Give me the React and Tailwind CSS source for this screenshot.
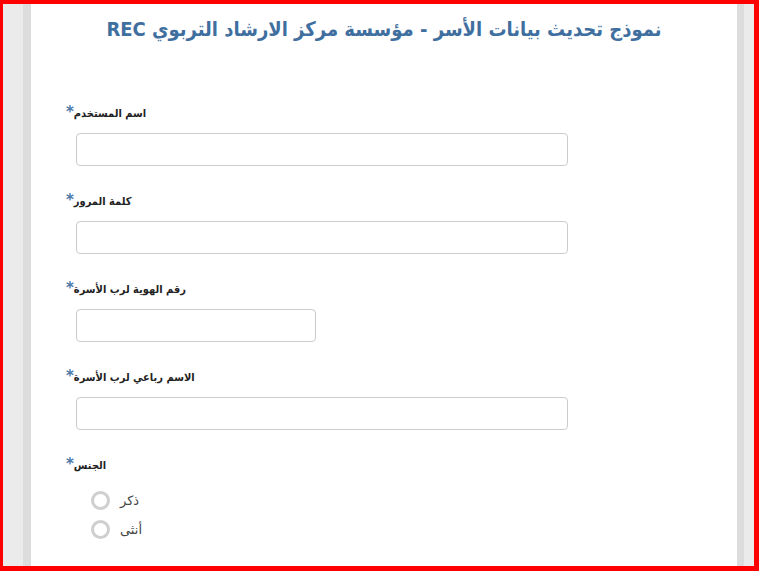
// Family data update form — static UI snapshot
const FIELDS = [
  { label: "اسم المستخدم", width: "w-[492px]" },
  { label: "كلمة المرور", width: "w-[492px]" },
  { label: "رقم الهوية لرب الأسرة", width: "w-[240px]" },
  { label: "الاسم رباعي لرب الأسرة", width: "w-[492px]" },
];

function FieldLabel({ children }) {
  return (
    <div className="flex h-[20px] items-center">
      <span className="mb-[3px] text-[15px] font-bold leading-none text-[#4a77a8]">*</span>
      <span
        dir="rtl"
        className="text-[11px] font-bold text-[#222]"
        style={{ fontFamily: '"DejaVu Sans Condensed", "DejaVu Sans", sans-serif' }}
      >
        {children}
      </span>
    </div>
  );
}

function Radio({ label }) {
  return (
    <label className="flex h-[29px] items-center">
      <span className="h-[19px] w-[19px] rounded-full border-[3px] border-[#cfcfcf] bg-white" />
      <span dir="rtl" className="ml-[10px] text-[13px] text-[#444]">
        {label}
      </span>
    </label>
  );
}

export default function App() {
  return (
    <div
      className="flex h-[571px] w-[759px] border-t-4 border-l-[3px] border-r-[5px] border-b-[5px] border-[#ff0000] bg-white"
      style={{ fontFamily: '"DejaVu Sans", "Liberation Sans", sans-serif' }}
    >
      <div className="w-[20px] bg-[#ebebeb]" />
      <div className="w-[8px] bg-[#dcdcdc]" />

      <main className="flex-1 overflow-hidden bg-white">
        {/* Title */}
        <h1
          dir="rtl"
          className="pt-[9px] text-center text-[20px] font-bold leading-[32px] text-[#3f6f9f]"
          style={{ fontFamily: '"DejaVu Sans Condensed", "DejaVu Sans", sans-serif' }}
        >
          نموذج تحديث بيانات الأسر - مؤسسة مركز الارشاد التربوي REC
        </h1>

        {/* Fields */}
        <div className="mt-[59px] pl-[35px]">
          {FIELDS.map((f) => (
            <div key={f.label} className="mb-[26px]">
              <FieldLabel>{f.label}</FieldLabel>
              <input
                type="text"
                className={`ml-[10px] mt-[9px] block h-[33px] ${f.width} rounded-[4px] border border-[#cccccc] bg-white`}
              />
            </div>
          ))}

          <FieldLabel>الجنس</FieldLabel>
          <div className="mt-[10px] pl-[25px]">
            <Radio label="ذكر" />
            <Radio label="أنثى" />
          </div>
        </div>
      </main>

      <div className="w-[7px] bg-[#dcdcdc]" />
      <div className="w-[10px] bg-[#ebebeb]" />
    </div>
  );
}
